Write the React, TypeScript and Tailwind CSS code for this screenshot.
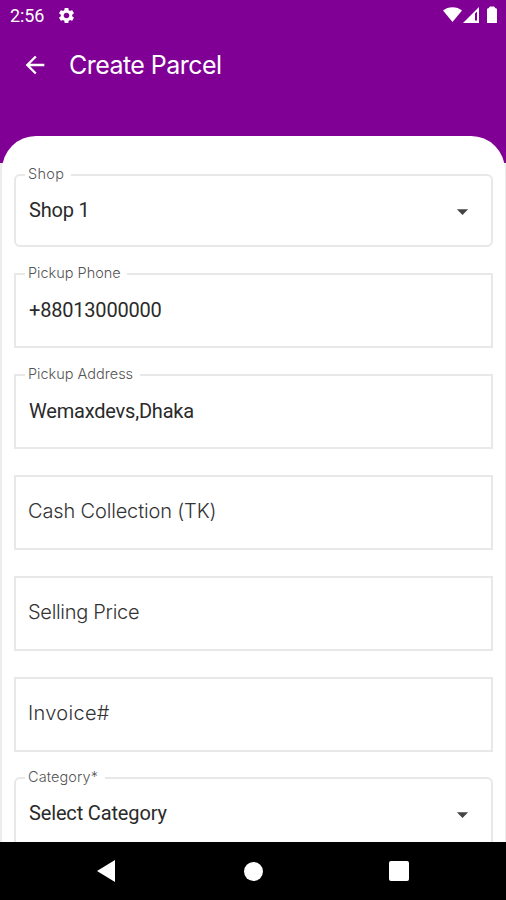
import clsx from 'clsx'
import { MdArrowBack, MdArrowDropDown, MdSettings } from 'react-icons/md'

type Field = {
  label: string
  value?: string
  select?: boolean
  boxClass: string
  labelClass: string
  textClass: string
}

const FIELDS: Field[] = [
  {
    label: 'Shop',
    value: 'Shop 1',
    select: true,
    boxClass: 'h-[73px] mb-[26px] pb-[2px]',
    labelClass: 'w-[46px] tracking-[0.3px]',
    textClass: 'tracking-[-0.2px]',
  },
  {
    label: 'Pickup Phone',
    value: '+88013000000',
    boxClass: 'h-[75px] mb-[26px] pb-[1px]',
    labelClass: 'w-[102px] tracking-[0px]',
    textClass: 'tracking-[-0.2px]',
  },
  {
    label: 'Pickup Address',
    value: 'Wemaxdevs,Dhaka',
    boxClass: 'h-[75px] mb-[26px] pb-[1px]',
    labelClass: 'w-[115px] tracking-[0px]',
    textClass: 'tracking-[-0.2px]',
  },
  {
    label: 'Cash Collection (TK)',
    boxClass: 'h-[75px] mb-[26px] pb-[3px]',
    labelClass: '',
    textClass: 'tracking-[-0.15px]',
  },
  {
    label: 'Selling Price',
    boxClass: 'h-[75px] mb-[26px] pb-[3px]',
    labelClass: '',
    textClass: 'tracking-[-0.3px]',
  },
  {
    label: 'Invoice#',
    boxClass: 'h-[75px] mb-[25px] pb-[3px]',
    labelClass: '',
    textClass: 'tracking-[0.3px]',
  },
  {
    label: 'Category*',
    value: 'Select Category',
    select: true,
    boxClass: 'h-[74px] pb-[3px]',
    labelClass: 'w-[80px] tracking-[0.1px]',
    textClass: 'tracking-[-0.15px]',
  },
]

function StatusBar() {
  return (
    <div className="flex h-8 items-center pl-[10px] pr-[8px] text-white">
      <span className="font-[Roboto,sans-serif] text-[18px] leading-8 tracking-[-0.1px]">2:56</span>
      <MdSettings className="-mt-[2px] ml-[13px] size-[19px]" />
      {/* wifi, signal, battery */}
      <svg className="-mt-[2px] ml-auto h-[18px] w-[55px]" viewBox="0 0 55 18" fill="currentColor">
        <path d="M0 4.5C5 0 14 0 19 4.5L9.5 16Z" />
        <path fillRule="evenodd" d="M36 1V17H20ZM32 7.5V14.5H34V5.5Z" />
        <path d="M44 3.5Q44 2.2 45.5 2.2L47 0.6H51L52.5 2.2Q54 2.2 54 3.5V17H44Z" />
      </svg>
    </div>
  )
}

function FormField({ field }: { field: Field }) {
  const filled = field.value !== undefined

  return (
    <div
      className={clsx(
        'relative flex shrink-0 items-center justify-between border-2 border-[#e8e8e8] pr-[15px] pl-[13px]',
        field.select && 'rounded-[6px]',
        field.boxClass
      )}
    >
      {filled && (
        <span
          className={clsx(
            'absolute -top-[12px] left-[9px] bg-white pl-[3px] font-[Inter,sans-serif] text-[14.5px] leading-5 font-light whitespace-nowrap text-[#555]',
            field.labelClass
          )}
        >
          {field.label}
        </span>
      )}
      <span
        className={clsx(
          'text-[20px] leading-6 whitespace-nowrap',
          filled
            ? 'font-[Roboto,sans-serif] text-[#2a2a2a]'
            : '-ml-px font-[Inter,sans-serif] font-light text-[#333]',
          field.textClass
        )}
      >
        {filled ? field.value : field.label}
      </span>
      {field.select && <MdArrowDropDown className="mt-[4px] size-[27px] text-[#444]" />}
    </div>
  )
}

function NavBar() {
  return (
    <div className="flex h-[58px] shrink-0 items-center bg-black pl-[97px] text-white">
      <svg className="h-[22px] w-[18px]" viewBox="0 0 18 22" fill="currentColor">
        <path d="M18 0V22L0 11Z" />
      </svg>
      <div className="ml-[129px] size-[19px] rounded-full bg-white" />
      <div className="ml-[126px] size-[20px] rounded-[2px] bg-white" />
    </div>
  )
}

export default function App() {
  return (
    <div className="flex h-[900px] w-[506px] flex-col overflow-hidden bg-[#ececec]">
      <header className="h-[163px] shrink-0 bg-[#800095]">
        <StatusBar />
        <div className="flex h-[66px] items-center pl-[21px] text-white">
          <MdArrowBack className="size-[28px]" />
          <h1 className="ml-[20px] font-[Inter,sans-serif] text-[25px] leading-8 font-normal tracking-[-0.55px]">
            Create Parcel
          </h1>
        </div>
      </header>
      <main className="relative -mt-[27px] mr-px ml-[2px] flex min-h-0 flex-1 flex-col overflow-hidden rounded-t-[34px] bg-white px-[12px] pt-[38px]">
        {FIELDS.map((field) => (
          <FormField key={field.label} field={field} />
        ))}
      </main>
      <NavBar />
    </div>
  )
}
